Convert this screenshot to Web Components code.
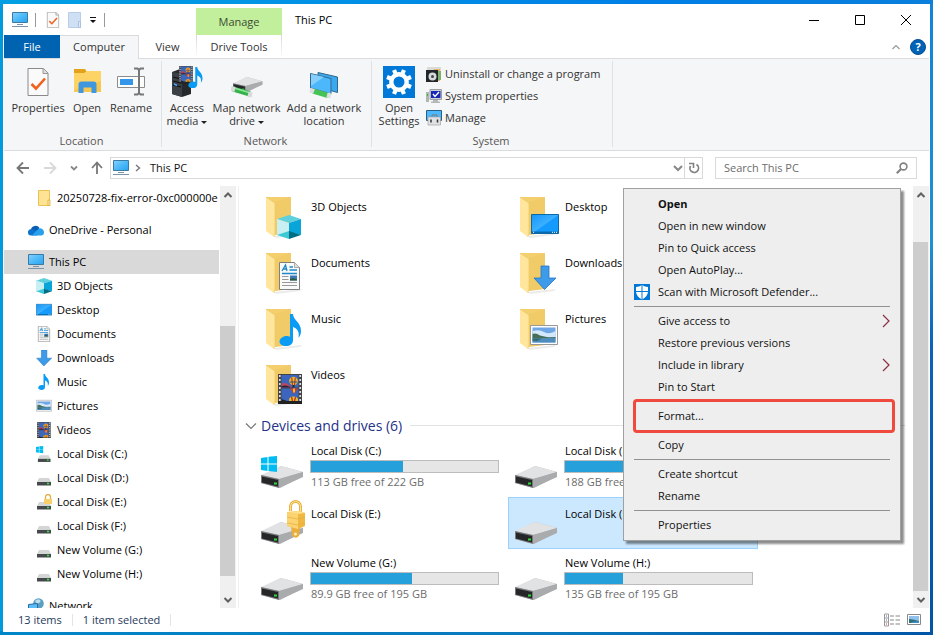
<!DOCTYPE html>
<html lang="en">
<head>
<meta charset="utf-8">
<title>This PC</title>
<style>
html,body{margin:0;height:100%}
body{
  font:11px/16px "Open Sans","Noto Sans",sans-serif;color:#111;
  background:
    linear-gradient(90deg,#0086c8,#0a78bc 60%,#0055a6) bottom/100% 4px no-repeat,
    linear-gradient(90deg,#009fe3,#0091e6 35%,#007fe6 70%,#0a7fdc) top/100% 4px no-repeat,
    linear-gradient(180deg,#1283d8,#2090d4 38%,#0a62bb 55%,#0055a6) right/4px 100% no-repeat,
    #009bdd;
}
</style>
</head>
<body>
<explorer-window></explorer-window>
<script>
const drive = `<path d="M0 10 20 0 42 6 42 10 19 22 0 17Z" fill="#b9bbbd"/><path d="M0 9 20 0 42 6 18 13Z" fill="#e1e2e4"/><path d="M18 13 42 6V11L18 22Z" fill="#a9abad"/><path d="M0 9 18 13V22L0 17Z" fill="#77797b"/><path d="M1 10.5 17 14V20.5L1 16.5Z" fill="#252628"/><path d="M13 16.5h3v2h-3z" fill="#2bdc3a"/>`;
const folder = `<path d="M2 0H27V34H2Z" fill="#f3cf6d"/><path d="M11 5 27 0V36L11 38Z" fill="#f1cb68"/><path d="M10 39 38 36 36 38 12 41Z" fill="#000" opacity=".08"/><path d="M2 0 11 6V35L10 40 2 34Z" fill="#ffe69c"/><path d="M2 0 11 6V35L10 40" fill="none" stroke="#ecc763" stroke-width=".7"/>`;
const cube = `<path d="M12 0 24 4 12 8 0 4Z" fill="#5fd0dc"/><path d="M0 4 12 8V17L0 20Z" fill="#c8eff2"/><path d="M24 4 12 8V17L24 20Z" fill="#0aa5d8"/><path d="M0 20 12 16 12 24Z" fill="#3cc9d6"/><path d="M24 20 12 16V24Z" fill="#006f86"/>`;
const film = `<path d="M0 0H24V28H0Z" fill="#444"/><path d="M1.800 1V28M22.200 1V28" stroke="#ddd" stroke-width="1.700" stroke-dasharray="2 2"/><path d="M3.500 1H20.500V13.500H3.500ZM3.500 14.500H20.500V27H3.500Z" fill="#3c66bd"/><path d="M3.500 9.500Q8 8 11 11L14 13.500H3.500Z" fill="#b8485c"/><path d="M3.500 12 8 11.500 14 13.500H3.500Z" fill="#28233a"/><ellipse cx="15.500" cy="7" rx="4.300" ry="4.200" fill="#e5bd35"/><path d="M13.700 3.500 14.500 11M17.300 3.500 16.500 11" stroke="#b83a2a" stroke-width="1.200"/><path d="M12 8H19" stroke="#394a78"/><path d="M14.500 11h2v2.500h-2z" fill="#2a2020"/><path d="M12 14.500H20L16 20Z" fill="#cf3a2e"/><path d="M15 14.500h2v4h-2z" fill="#e5bd35"/><ellipse cx="15.500" cy="26" rx="4.500" ry="3.500" fill="#e5bd35"/><path d="M13.500 23 14.500 27M17.500 23 16.500 27" stroke="#c22f22" stroke-width="1.300"/><path d="M0 27H24V30H0ZM3.500 25 9 27H3.500Z" fill="#222"/>`;
const photo = `<path d="M.5.5H27.500V19.500H.5Z" fill="#fff" stroke="#999"/><path d="M2.500 2.500H25.500V17.500H2.500Z" fill="#6fa7e6"/><path d="M3 6Q9 4 14 7T25.500 6V12H3Z" fill="#d5e8fb"/><path d="M2.500 9Q6 7.500 10 10.500L19 12.500 25.500 12V13.500H2.500Z" fill="#476f58"/><path d="M2.500 13.500H25.500V17.500H2.500Z" fill="#4d8dbd"/><path d="M2.500 13.500H12L7 16 2.500 15.500Z" fill="#376a6a"/>`;
const doc = `<path d="M.5.5H15.500L20.500 5.500V27.500H.5Z" fill="#fafafa" stroke="#808080"/><path d="M15.500.5V5.500H20.500" fill="#e0e0e0" stroke="#999" stroke-width=".8"/><path d="M3 9 6.500 3 8 9M4 7H8M10.500 5H14M10.500 8H18M3 11.500H18" fill="none" stroke="#1e88c9" stroke-width="1.300"/><path d="M3 14.500H9.500M3 17.500H9.500M3 20.500H18M3 23.500H18" stroke="#999"/><path d="M11 13.500H18V18.500H11Z" fill="#3d77b5"/><path d="M11 17 14 16 18 17.500V18.500H11Z" fill="#2d5c3c"/>`;
const note = `<path d="M11 0h3c0 6 8 8 8 17 0 3-1 5-2.500 7 1-6-.5-9-5.500-11V26c0 4-3 6-7 6-4 0-6.500-2-6.500-4.500C.5 24.500 4 22 7.500 22c1.500 0 2.500.3 3.500.8Z" fill="#0a9bf5"/>`;
const pcShape = `<linearGradient id="s" x2="1" y2="1"><stop stop-color="#87d2fd"/><stop offset=".5" stop-color="#4dbaf9"/><stop offset="1" stop-color="#2aa3ef"/></linearGradient><path d="M.5.5H15.500V10.500H.5Z" fill="url(#s)" stroke="#3a7ba6"/><path d="M5 12.500H11M0 14.500H16" stroke="#7e93a8"/>`;
const smallDrive = `<path d="M3 8H13L15 12H1Z" fill="#d3d5d7"/><path d="M1 12H15V15.500H1Z" fill="#46494b"/><path d="M11 13.500h2" stroke="#36ee41" stroke-width="1.300"/>`;
const lock = `<path d="M3.500 11V6.500a5 5 0 0 1 10 0V13" fill="none" stroke="#e9b13d" stroke-width="3"/><path d="M3.500 11V6.500a5 5 0 0 1 10 0V13" fill="none" stroke="#ffe39a" stroke-width="1"/><path d="M4 25 13 27 12 36 9 38 5 36Z" fill="#e9ae3c"/><path d="M0 12 12 11 18 13V26L11 29 0 26Z" fill="#f0b843"/><path d="M0 12 11 14V29L0 26Z" fill="#fbd370"/><path d="M0 12 12 11 18 13 11 14Z" fill="#ffe08a"/><path d="M0 17 11 19 18 17M0 23 11 25 18 23" stroke="#e0a838" fill="none" stroke-width=".6"/><circle cx="8.500" cy="34" r="1.500" fill="#fff0c0"/>`;
const pageCheck = `<path d="M.5.5H16L20.500 5V27.500H.5Z" fill="#fafafa" stroke="#8a8a8a"/><path d="M15.500.5V5.500H20.500" fill="#ddd" stroke="#999"/><path d="M4 16 8.500 20.500 17.500 10.500" fill="none" stroke="#f2601d" stroke-width="2.600"/>`;
const arrowDown = `<path d="M8 0H16V12H23L11.500 23.500 1 12H8Z" fill="#3d9be9" stroke="#2477c4" stroke-width=".8"/>`;
const deskShape = `<linearGradient id="d" x2="1" y2="1"><stop stop-color="#1495fb"/><stop offset=".5" stop-color="#3db0ff"/><stop offset=".52" stop-color="#159bff"/><stop offset="1" stop-color="#109aff"/></linearGradient><path d="M.5.5H27.500V19.500H.5Z" fill="url(#d)" stroke="#0b68a9"/><path d="M1 17.500H27V19H1Z" fill="#0b68a9"/><path d="M2 18.300H3M21 18.300H26" stroke="#fff" stroke-dasharray="1 1"/>`;
const winLogo = `<path d="M0 2 6.500 1V7.500H0ZM7.500 .8 16 0V7.500H7.500ZM0 8.500H6.500V15L0 14ZM7.500 8.500H16V16L7.500 15Z" fill="#00bcf2"/>`;
const at = (x,y,s,b) => `<g transform="translate(${x} ${y}) scale(${s})">${b}</g>`;
// name: [width, height, markup]
const ICONS = {
  pc:[16,16,pcShape],
  pageCheckSmall:[16,16,at(2,0,.57,pageCheck)],
  folderDim:[16,16,`<path d="M1.500.5H13.500V15.500H1.500Z" fill="#cfe0f5" stroke="#b9cde8"/><path d="M11.500 9.500h2v6h-2z" fill="#dfe9f8" stroke="#a9c1e2"/>`],
  overflow:[8,8,`<path d="M1 1.500H7" stroke="#111"/><path d="M1 4H7L4 7Z" fill="#111"/>`],
  min:[10,10,`<path d="M0 5.500H10" stroke="#000"/>`],
  max:[10,10,`<path d="M.5.5H9.500V9.500H.5Z" fill="none" stroke="#000"/>`],
  close:[10,10,`<path d="M0 0 10 10M10 0 0 10" stroke="#000"/>`],
  up:[8,8,`<path d="M.5 6 4 2.500 7.500 6" fill="none" stroke="#999" stroke-width="1.200"/>`],
  properties:[32,32,at(5.500,2,1,pageCheck)],
  open:[32,32,`<path d="M3 3H14L16 6H30V14H3Z" fill="#e3a21a"/><path d="M3 7H13L16 5H30V26H3Z" fill="#fdd365"/><path d="M3 26V24L30 15V26Z" fill="#f8c74f"/><path d="M7.500 27V18.500a3 3 0 0 1 3-3H22.500a3 3 0 0 1 3 3V27H20.500V21.500H12.500V27Z" fill="#3f97e0"/>`],
  rename:[32,32,`<path d="M2.500 10.500H29.500V21.500H2.500Z" fill="#fff" stroke="#8c8c8c"/><path d="M5 13H18V19H5Z" fill="#3595e8"/><path d="M19 2.500H22.500L24 4 25.500 2.500H29M24 4V27M19 28.500H22.500L24 27 25.500 28.500H29" fill="none" stroke="#777" stroke-width="2"/>`],
  media:[32,32,`<path d="M1 6 9 3 20 5V28L11 31 1 28Z" fill="#26292c"/><path d="M1 6 11 8V31L1 28Z" fill="#3b4047"/><path d="M2 11 10 13M2 15 10 17M2 19 10 21" stroke="#0c0e10"/><path d="M3 18 6 19.500" stroke="#47a9ff" stroke-width="1.500"/>${at(8,0,.58,film)}${at(17,1,.66,note)}`],
  mapDrive:[32,32,at(2,11,.7,drive)+`<path d="M2 23 19 28" stroke="#35b24c" stroke-width="5"/><path d="M3 22 18 26.500" stroke="#8be897" stroke-width="1.500"/><path d="M0 22.500 4 23.500M17 28 21 29" stroke="#d8dadb" stroke-width="5"/>`],
  netLocation:[32,32,`<path d="M10 6.500 29.500 11V26.500L10 21Z" fill="#3aa9ee" stroke="#33688c"/><path d="M2.500 7.500 23 12.500V28L2.500 22Z" fill="#4cb7fb" stroke="#33688c"/><path d="M3 8 16 11 3 20Z" fill="#84cffc"/><path d="M5 25 20 29.500" stroke="#46c357" stroke-width="5"/><path d="M2 24 6 25.500M19 29 23 30" stroke="#dcdedf" stroke-width="5"/>`],
  gear:[32,32,`<path d="M0 0H32V32H0Z" fill="#0078d7"/><circle cx="16" cy="16" r="7.700" fill="none" stroke="#fff" stroke-width="4.400"/><path d="M16 3V8M16 24V29M3 16H8M24 16H29M6.800 6.800 10.300 10.300M21.700 21.700 25.200 25.200M25.200 6.800 21.700 10.300M10.300 21.700 6.800 25.200" stroke="#fff" stroke-width="4.200" transform="rotate(22.500 16 16)"/>`],
  uninstall:[16,16,`<path d="M1 1H15V5H1Z" fill="#d9dbd6"/><path d="M8 3H14V15H8Z" fill="#e8b36e"/><path d="M11 5H15V14H11Z" fill="#7fb06e"/><path d="M0 4H12V16H0Z" fill="#232629"/><circle cx="6.500" cy="10.500" r="4" fill="#d5dadd"/><circle cx="6.500" cy="10.500" r="1.500" fill="#444"/>`],
  sysProps:[16,16,`<path d="M0 4H3V14H0Z" fill="#aeb6b0"/><path d="M1 6h1v2h-1z" fill="#2fbf3a"/><path d="M4 1.500H15.500V11.500H4Z" fill="#cfd2d4" stroke="#9da0a3"/><path d="M5 3H14.500V10H5Z" fill="#1726b8"/><path d="M7 6 9 8.500 13 4" fill="none" stroke="#fff" stroke-width="1.400"/><path d="M7 12H12V13.500H14V15H5V13.500H7Z" fill="#b5b8ba"/>`],
  manage:[16,16,`<path d="M.5.5H15.500V10.500H.5Z" fill="#4cb7fb" stroke="#285f86"/><path d="M6 6.500V5H11V6.500" fill="none" stroke="#777"/><path d="M2 7H14.500V15H2Z" fill="#dfe1e3" stroke="#999" stroke-width=".6"/><path d="M5 9.500V12.500M11.500 9.500V12.500" stroke="#333" stroke-width="1.500"/>`],
  back:[16,16,`<path d="M14 8H3M8 2.500 2.500 8 8 13.500" fill="none" stroke="#777" stroke-width="1.800"/>`],
  fwd:[16,16,`<path d="M2 8H13M8 2.500 13.500 8 8 13.500" fill="none" stroke="#d9d9d9" stroke-width="1.800"/>`],
  upArrow:[16,16,`<path d="M8 14V3M3 8 8 2.500 13 8" fill="none" stroke="#777" stroke-width="1.800"/>`],
  chev:[8,8,`<path d="M1 2.500 4 5.500 7 2.500" fill="none" stroke="#888" stroke-width="1.800"/>`],
  chevBig:[10,10,`<path d="M1 3 5 7 9 3" fill="none" stroke="#888" stroke-width="2"/>`],
  crumb:[8,8,`<path d="M2 1 5.500 4 2 7" fill="none" stroke="#777" stroke-width="1.400"/>`],
  refresh:[12,12,`<path d="M8.500 2.500A4.300 4.300 0 1 1 2.500 4" fill="none" stroke="#808080" stroke-width="1.700"/><path d="M1 1.500H5.500V6" fill="none" stroke="#808080" stroke-width="1.600"/>`],
  search:[12,12,`<circle cx="7.500" cy="4.500" r="3.400" fill="none" stroke="#808080" stroke-width="1.600"/><path d="M5 7 .8 11.200" stroke="#808080" stroke-width="2"/>`],
  folderSmall:[16,16,`<path d="M2.500.5H13.500V15.500H2.500Z" fill="#ffe394" stroke="#e8c353"/><path d="M12 10h2v5.500h-2z" fill="#ffe9a8" stroke="#d9ae3b" stroke-width=".8"/>`],
  onedrive:[16,16,`<path d="M3 7.500A4.500 4 0 0 1 11.500 6L8 11 3 10Z" fill="#0a5fb5"/><path d="M0 10.500A3.200 3.200 0 0 1 5 7.500L14 12 8 13.500H3A3 3 0 0 1 0 10.500Z" fill="#0c74cf"/><path d="M8 9 11 6.500A4 4 0 0 1 16 10.500 3 3 0 0 1 13.500 13.500H4Z" fill="#28a0ea"/>`],
  cube:[16,16,at(0,0,.667,cube)],
  desktop:[16,16,at(0,2,.571,deskShape)],
  documents:[16,16,at(2,0,.57,doc)],
  downloads:[16,16,at(0,0,.68,arrowDown)],
  music:[16,16,at(2,0,.5,note)],
  pictures:[16,16,at(0,2,.571,photo)],
  videos:[16,16,at(1,0,.571,film)],
  driveC:[16,16,at(0,0,.45,winLogo)+at(1,2,.9,smallDrive)],
  drive:[16,16,smallDrive],
  driveLock:[16,16,smallDrive+`<path d="M9.500 5V3a2.500 2.500 0 0 1 5 0V5" fill="none" stroke="#e0b040" stroke-width="1.300"/><path d="M8 5H16V10H8Z" fill="#f8cf6a"/>`],
  network:[16,16,`<circle cx="10.500" cy="5.500" r="5.300" fill="#5b9fc4"/><path d="M7 3Q10 0 12 2T9 6Z" fill="#bfe0ee"/><path d="M.5 6.500 9.500 5.500V13L.5 14Z" fill="#58bdf8" stroke="#2b6b9d"/>`],
  bigCube:[48,48,at(6,5,1,folder)+at(19,23,1,cube)],
  bigDesktop:[48,48,at(6,5,1,folder)+at(19,22,1,deskShape)],
  bigDocuments:[48,48,at(6,5,1,folder)+at(21,14,1,doc)],
  bigDownloads:[48,48,at(6,5,1,folder)+at(21,18,1,arrowDown)],
  bigMusic:[48,48,at(6,5,1,folder)+at(21,10,1,note)],
  bigPictures:[48,48,at(6,5,1,folder)+at(18,21,1,photo)],
  bigVideos:[48,48,at(6,5,1,folder)+at(20,14,1,film)],
  bigDrive:[48,48,at(3,23,1,drive)],
  bigDriveC:[48,48,at(3,23,1,drive)+at(3,13,1,winLogo)],
  bigDriveLock:[48,48,at(3,23,1,drive)+at(29,1,1,lock)],
  expand:[12,12,`<path d="M1 3.500 6 8.500 11 3.500" fill="none" stroke="#777" stroke-width="1.200"/>`],
  defender:[16,16,`<path d="M0 0H16V16H0Z" fill="#0078d7"/><path d="M8 1Q11 3 14 3V8Q13.500 12.500 8 15.500 2.500 12.500 2 8V3Q5 3 8 1Z" fill="#fff"/><path d="M8 1V15.500M2 7.500H14" stroke="#0078d7"/>`],
  sub:[8,14,`<path d="M1 1 7 7 1 13" fill="none" stroke="#8a3040" stroke-width="1.200"/>`],
  sbUp:[10,10,`<path d="M1.500 7 5 3.500 8.500 7" fill="none" stroke="#606060" stroke-width="2"/>`],
  sbDown:[10,10,`<path d="M1.500 3 5 6.500 8.500 3" fill="none" stroke="#606060" stroke-width="2"/>`],
  details:[16,14,`<path d="M.5 1H4.500V13H.5Z" fill="#fff" stroke="#999"/><path d="M.5 5H4.500M.5 9H4.500" stroke="#999"/><path d="M2 3h1M2 7h1" stroke="#37a"/><path d="M2 11h1" stroke="#c33"/><path d="M6 3H10M11.500 3H16M6 7H10M11.500 7H16M6 11H10M11.500 11H16" stroke="#888"/>`],
  thumbs:[14,12,`<path d="M.5.5H13.500V10.500H.5Z" fill="#fff" stroke="#888"/><path d="M2 2H12V9H2Z" fill="#8fc0ee"/><path d="M2 5 6 5.500 12 7V9H2Z" fill="#2f6f78"/><path d="M5 8 12 7V9H4Z" fill="#3f8fc8"/>`],
};

function define(name, css, html, setup) {
  const t = document.createElement('template');
  t.innerHTML = `<style>*{box-sizing:border-box}
    button,input,a{font:inherit;color:inherit;background:none;border:0;margin:0;padding:0;text-decoration:none;outline:0}
    ${css}</style>${html}`;
  customElements.define(name, class extends HTMLElement {
    connectedCallback() {
      if (this.shadowRoot) return;
      const root = this.attachShadow({mode:'open'});
      root.append(t.content.cloneNode(true));
      if (setup) setup(this, root);
    }
  });
}

define('win-icon', `:host{display:inline-flex;flex:none}svg{display:block}`, ``, (el, root) => {
  const [w,h,body] = ICONS[el.getAttribute('name')];
  const box = document.createElement('div');
  box.innerHTML = `<svg width="${w}" height="${h}" viewBox="0 0 ${w} ${h}" aria-hidden="true">${body}</svg>`;
  root.append(box.firstChild);
});

define('icon-button', `:host{display:flex}button{display:flex;align-items:center;justify-content:center;width:100%;height:100%}`,
  `<button></button>`, (el, root) => {
    const b = root.querySelector('button');
    b.setAttribute('aria-label', el.getAttribute('label'));
    b.innerHTML = `<win-icon name="${el.getAttribute('icon')}"></win-icon>`;
  });

define('title-bar', `
  :host{display:flex;height:31px}
  .quick{width:var(--tabs-width);display:flex;align-items:center;padding-left:8px;gap:6px}
  i{width:1px;height:14px;background:#999;margin:0 3px 0 1px}
  .manage{width:86px;margin-top:4px;background:#c2ef9b;color:#3c4a33;display:flex;align-items:center;justify-content:center}
  .title{padding-left:13px;align-self:center;flex:1;color:#000}
  icon-button{width:46px}
  .quick icon-button{width:auto}`,
  `<div class="quick"><win-icon name="pc"></win-icon><i></i><icon-button icon="pageCheckSmall" label="Properties"></icon-button><icon-button icon="folderDim" label="New folder"></icon-button><icon-button icon="overflow" label="Customize"></icon-button><i></i></div>
   <div class="manage">Manage</div><div class="title">This PC</div>
   <icon-button icon="min" label="Minimize"></icon-button><icon-button icon="max" label="Maximize"></icon-button><icon-button icon="close" label="Close"></icon-button>`);

define('ribbon-tabs', `
  :host{display:flex;height:24px;border-bottom:1px solid #dadbdc;color:#333}
  .set{display:grid;grid-template-columns:56px 79px 1fr;width:var(--tabs-width)}
  .file{background:#0063b1;color:#fff}
  .on{background:#f5f6f7;border:1px solid #dadbdc;border-bottom:0;border-left:0;margin-bottom:-1px;padding-bottom:2px}
  .tools{width:86px;border:solid;border-width:0 1px;border-image:linear-gradient(#d5d5d5,#fff) 1}
  .end{margin-left:auto;display:flex;align-items:center;padding-right:3px;gap:10px}
  .help{width:16px;height:16px;border-radius:50%;background:#0063b8;border:1px solid #064f90;color:#fff;font-weight:700;line-height:14px}`,
  `<div class="set"><button class="file">File</button><button class="on">Computer</button><button>View</button></div><button class="tools">Drive Tools</button>
   <div class="end"><icon-button icon="up" label="Collapse ribbon"></icon-button><button class="help" aria-label="Help">?</button></div>`);

define('ribbon-group', `
  :host{display:flex;flex-direction:column;width:var(--w);border-right:1px solid #dfe1e3;margin:2px 0 3px;color:#555}
  .items{display:flex;flex:1;padding-left:4px;color:#333}
  .label{text-align:center;line-height:16px;margin-bottom:-2px;height:16px;padding-right:2px}`,
  `<div class="items"><slot></slot></div><div class="label"></div>`,
  (el, root) => root.querySelector('.label').textContent = el.getAttribute('label'));

define('ribbon-button', `
  :host{display:block;width:var(--w)}
  button{display:flex;flex-direction:column;align-items:center;width:100%;line-height:13px;padding-top:5px;gap:3px;white-space:nowrap}`,
  `<button><slot name="icon"></slot><span><slot></slot></span></button>`);

define('ribbon-command', `:host{display:block}button{display:flex;align-items:center;gap:3px;height:22px;white-space:nowrap}`,
  `<button><slot name="icon"></slot><slot></slot></button>`);

define('ribbon-bar', `
  :host{display:flex;height:92px;background:#f5f6f7;border-bottom:1px solid #dadbdc}
  .list{padding:2px 0 0 4px}
  .caret{display:inline-block;border:3px solid transparent;border-top-color:#222;border-bottom:0;vertical-align:middle;margin-left:3px}`,
  `<ribbon-group label="Location" style="--w:158px">
     <ribbon-button style="--w:60px"><win-icon slot="icon" name="properties"></win-icon>Properties</ribbon-button>
     <ribbon-button style="--w:38px"><win-icon slot="icon" name="open"></win-icon>Open</ribbon-button>
     <ribbon-button style="--w:50px"><win-icon slot="icon" name="rename"></win-icon>Rename</ribbon-button>
   </ribbon-group>
   <ribbon-group label="Network" style="--w:210px">
     <ribbon-button style="--w:42px"><win-icon slot="icon" name="media"></win-icon>Access<br>media<span class="caret"></span></ribbon-button>
     <ribbon-button style="--w:77px"><win-icon slot="icon" name="mapDrive"></win-icon>Map network<br>drive<span class="caret"></span></ribbon-button>
     <ribbon-button style="--w:78px"><win-icon slot="icon" name="netLocation"></win-icon>Add a network<br>location</ribbon-button>
   </ribbon-group>
   <ribbon-group label="System" style="--w:241px">
     <ribbon-button style="--w:46px"><win-icon slot="icon" name="gear"></win-icon>Open<br>Settings</ribbon-button>
     <div class="list">
       <ribbon-command><win-icon slot="icon" name="uninstall"></win-icon>Uninstall or change a program</ribbon-command>
       <ribbon-command><win-icon slot="icon" name="sysProps"></win-icon>System properties</ribbon-command>
       <ribbon-command><win-icon slot="icon" name="manage"></win-icon>Manage</ribbon-command>
     </div>
   </ribbon-group>`);

define('address-bar', `
  :host{display:flex;align-items:center;height:33px;padding:0 12px 0 10px}
  .nav{display:flex;align-items:center;width:96px;justify-content:space-between;padding:0 5px 0 1px}
  .path,.find{display:flex;align-items:center;height:22px;border:1px solid #d9d9d9}
  .path{flex:1;padding-left:2px;gap:5px}
  .path span{flex:1;padding-left:3px}
  .chev{margin-right:-4px}
  .refresh{border-left:1px solid #d9d9d9;width:18px;align-self:stretch}
  .find{width:202px;margin-left:12px;padding:0 8px}
  input{flex:1;min-width:0}
  input::placeholder{color:#6d6d6d;opacity:1}`,
  `<div class="nav"><icon-button icon="back" label="Back"></icon-button><icon-button icon="fwd" label="Forward"></icon-button><icon-button icon="chev" label="Recent locations"></icon-button><icon-button icon="upArrow" label="Up"></icon-button></div>
   <div class="path"><win-icon name="pc"></win-icon><win-icon name="crumb"></win-icon><span>This PC</span><icon-button class="chev" icon="chevBig" label="Previous locations"></icon-button><icon-button class="refresh" icon="refresh" label="Refresh"></icon-button></div>
   <label class="find"><input type="text" aria-label="Search This PC" placeholder="Search This PC"><win-icon name="search"></win-icon></label>`);

define('scroll-bar', `
  :host{display:flex;flex-direction:column;width:16px;background:#f0f0f0;flex:none}
  icon-button{height:17px;flex:none}
  .a{flex:var(--before) 0 0}.b{flex:var(--thumb) 0 0;background:#cdcdcd;margin-right:1px}.c{flex:var(--after) 0 0}`,
  `<icon-button icon="sbUp" label="Scroll up"></icon-button><div class="a"></div><div class="b"></div><div class="c"></div><icon-button icon="sbDown" label="Scroll down"></icon-button>`);

define('nav-item', `
  :host{display:block}
  a{display:flex;align-items:center;gap:5px;height:24px;padding-left:32px;white-space:nowrap;color:#000}
  :host([top]) a{padding-left:24px}
  :host([top]:not(:first-child)) a{margin-top:8px}
  :host([selected]) a{background:#d9d9d9}`,
  `<a href="#"><slot name="icon"></slot><slot></slot></a>`);

define('nav-pane', `
  :host{display:flex;width:235px;border-right:1px solid #f0f0f0;padding-right:2px;flex:none}
  nav{flex:1;overflow:hidden;margin-right:1px}
  scroll-bar{--before:123;--thumb:250;--after:15}`,
  `<nav aria-label="Folders"></nav><scroll-bar></scroll-bar>`, (el, root) => {
    root.querySelector('nav').innerHTML = [
      ['folderSmall','20250728-fix-error-0xc000000e',''],
      ['onedrive','OneDrive - Personal','top'],
      ['pc','This PC','top selected'],
      ['cube','3D Objects',''],['desktop','Desktop',''],['documents','Documents',''],['downloads','Downloads',''],
      ['music','Music',''],['pictures','Pictures',''],['videos','Videos',''],
      ['driveC','Local Disk (C:)',''],['drive','Local Disk (D:)',''],['driveLock','Local Disk (E:)',''],['drive','Local Disk (F:)',''],
      ['drive','New Volume (G:)',''],['drive','New Volume (H:)',''],
      ['network','Network','top'],
    ].map(([i,t,a]) => `<nav-item ${a}><win-icon slot="icon" name="${i}"></win-icon>${t}</nav-item>`).join('');
  });

define('file-tile', `
  :host{display:block}
  a{display:flex;height:52px;gap:4px;border:1px solid transparent;padding:1px 3px}
  :host([selected]) a{background:#cce8ff;border-color:#99d1ff}
  .text{flex:1;padding:7px 4px 0 0;white-space:nowrap;color:#000}
  .name{padding-left:1px;display:block}
  :host([used]) .text{padding-top:0}
  progress{display:block;appearance:none;width:189px;height:13px;border:1px solid #bcbcbc;margin:1px 0;background:#e6e6e6}
  progress::-webkit-progress-bar{background:#e6e6e6}
  progress::-webkit-progress-value{background:#26a0da}
  .free{padding-left:1px;color:#6d6d6d;display:block}`,
  `<a href="#"><slot name="icon"></slot><span class="text"><span class="name"><slot></slot></span></span></a>`, (el, root) => {
    if (!el.hasAttribute('used')) return;
    const p = document.createElement('progress');
    p.max = 100; p.value = el.getAttribute('used'); p.setAttribute('aria-label', 'Space used');
    const f = document.createElement('span');
    f.className = 'free'; f.textContent = el.getAttribute('free');
    root.querySelector('.text').append(p, f);
  });

define('file-view', `
  :host{display:flex;flex:1;min-width:0}
  .body{flex:1;min-width:0;padding:4px 8px 0 0;overflow:hidden}
  .grid{display:grid;grid-template-columns:repeat(auto-fill,250px);gap:4px;padding-left:15px}
  h2{display:flex;align-items:center;gap:4px;margin:0;padding-left:6px;height:31px;font-size:14px;font-weight:400;color:#1e3287}
  h2::after{content:"";flex:1;height:1px;background:#e2e2e2;margin-left:4px}
  scroll-bar{--before:39;--thumb:349;--after:0}`,
  `<div class="body"><div class="grid">
    <file-tile><win-icon slot="icon" name="bigCube"></win-icon>3D Objects</file-tile>
    <file-tile><win-icon slot="icon" name="bigDesktop"></win-icon>Desktop</file-tile>
    <file-tile><win-icon slot="icon" name="bigDocuments"></win-icon>Documents</file-tile>
    <file-tile><win-icon slot="icon" name="bigDownloads"></win-icon>Downloads</file-tile>
    <file-tile><win-icon slot="icon" name="bigMusic"></win-icon>Music</file-tile>
    <file-tile><win-icon slot="icon" name="bigPictures"></win-icon>Pictures</file-tile>
    <file-tile><win-icon slot="icon" name="bigVideos"></win-icon>Videos</file-tile>
   </div>
   <h2><win-icon name="expand"></win-icon>Devices and drives (6)</h2>
   <div class="grid">
    <file-tile used="49" free="113 GB free of 222 GB"><win-icon slot="icon" name="bigDriveC"></win-icon>Local Disk (C:)</file-tile>
    <file-tile used="40" free="188 GB free of 310 GB"><win-icon slot="icon" name="bigDrive"></win-icon>Local Disk (D:)</file-tile>
    <file-tile><win-icon slot="icon" name="bigDriveLock"></win-icon>Local Disk (E:)</file-tile>
    <file-tile selected><win-icon slot="icon" name="bigDrive"></win-icon>Local Disk (F:)</file-tile>
    <file-tile used="54" free="89.9 GB free of 195 GB"><win-icon slot="icon" name="bigDrive"></win-icon>New Volume (G:)</file-tile>
    <file-tile used="31" free="135 GB free of 195 GB"><win-icon slot="icon" name="bigDrive"></win-icon>New Volume (H:)</file-tile>
   </div></div><scroll-bar></scroll-bar>`);

define('status-bar', `
  :host{display:flex;align-items:center;height:24px;padding:0 8px 1px 14px;color:#1e395b}
  span{padding-right:10px;border-right:1px solid #e4e4e4;margin-right:10px;line-height:12px}
  .views{margin-left:auto;display:flex;align-items:center;gap:7px}`,
  `<span>13 items</span><span>1 item selected</span><div class="views"><icon-button icon="details" label="Details"></icon-button><icon-button icon="thumbs" label="Large icons"></icon-button></div>`);

define('menu-item', `
  :host{display:block;position:relative}
  button{display:flex;align-items:center;width:100%;height:22px;text-align:left;white-space:nowrap}
  .i{width:24px;display:flex}
  .t{flex:1}
  :host([bold]) .t{font-weight:700}
  :host([marked])::after{content:"";position:absolute;inset:-6px -5px -6px -1px;border:3px solid #f04a3e;border-radius:4px;pointer-events:none;z-index:1}`,
  `<button role="menuitem"><span class="i"><slot name="icon"></slot></span><span class="t"><slot></slot></span><slot name="more"></slot></button>`);

define('context-menu', `
  :host{display:block;width:278px;padding:4px 10px;border:1px solid #a0a0a0;background:#eee;box-shadow:3px 3px 2px rgba(0,0,0,.45);color:#111}
  hr{border:0;border-top:1px solid #919191;margin:3px 0}`,
  `<menu-item bold>Open</menu-item><menu-item>Open in new window</menu-item><menu-item>Pin to Quick access</menu-item><menu-item>Open AutoPlay...</menu-item>
   <menu-item><win-icon slot="icon" name="defender"></win-icon>Scan with Microsoft Defender...</menu-item><hr>
   <menu-item>Give access to<win-icon slot="more" name="sub"></win-icon></menu-item><menu-item>Restore previous versions</menu-item>
   <menu-item>Include in library<win-icon slot="more" name="sub"></win-icon></menu-item><menu-item>Pin to Start</menu-item><hr>
   <menu-item marked>Format...</menu-item><hr><menu-item>Copy</menu-item><hr>
   <menu-item>Create shortcut</menu-item><menu-item>Rename</menu-item><hr><menu-item>Properties</menu-item>`);

define('explorer-window', `
  :host{display:flex;height:100vh;box-sizing:border-box;padding:4px 3px 3px 3px;position:relative;--tabs-width:192px}
  .win{flex:1;min-width:0;display:flex;flex-direction:column;background:#fff;border:solid #fff;border-width:0 1px}
  .mid{flex:1;min-height:0;display:flex;padding-top:2px}
  context-menu{position:absolute;left:623px;top:188px}`,
  `<div class="win"><title-bar></title-bar><ribbon-tabs></ribbon-tabs><ribbon-bar></ribbon-bar><address-bar></address-bar>
   <div class="mid"><nav-pane></nav-pane><file-view></file-view></div><status-bar></status-bar></div>
   <context-menu role="menu"></context-menu>`);
</script>
</body>
</html>
